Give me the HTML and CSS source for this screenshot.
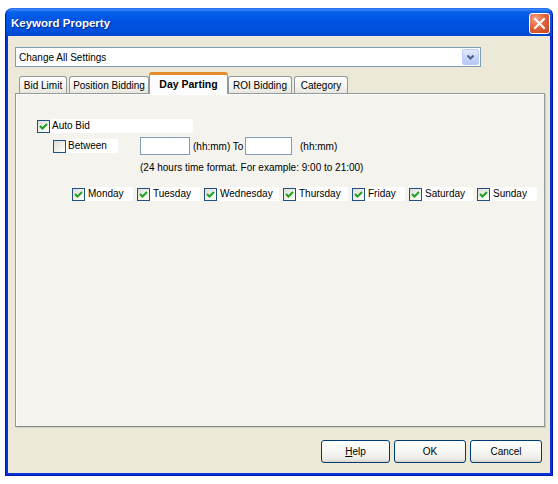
FILE: index.html
```html
<!DOCTYPE html>
<html>
<head>
<meta charset="utf-8">
<title>Keyword Property</title>
<link rel="stylesheet" href="styles.css">
</head>
<body>
<div class="window">
  <div class="titlebar">
    <span class="title">Keyword Property</span>
    <span class="close">
      <svg width="13" height="13" viewBox="0 0 13 13"><path d="M2 2 L11 11 M11 2 L2 11" stroke="#fff" stroke-width="2" stroke-linecap="square"/></svg>
    </span>
  </div>
  <div class="client">
    <div class="combo">
      <span class="combo-text">Change All Settings</span>
      <span class="combo-btn">
        <svg width="9" height="7" viewBox="0 0 9 7"><path d="M1.5 1.5 L4.5 4.5 L7.5 1.5" fill="none" stroke="#4d6185" stroke-width="2"/></svg>
      </span>
    </div>
    <div class="tabs">
      <div class="tab t-bid">Bid Limit</div>
      <div class="tab t-pos">Position Bidding</div>
      <div class="tab tab-active t-day">Day Parting</div>
      <div class="tab t-roi">ROI Bidding</div>
      <div class="tab t-cat">Category</div>
    </div>
    <div class="panel">
      <div class="row row-auto">
        <span class="cb checked"><svg width="11" height="11" viewBox="0 0 11 11"><path d="M2 5 L4.5 7.5 L9 3" fill="none" stroke="#21a121" stroke-width="2"/></svg></span>
        <span class="lbl lbl-auto">Auto Bid</span>
      </div>
      <div class="row row-between">
        <span class="cb"></span>
        <span class="lbl lbl-between">Between</span>
        <span class="tb tb-from"></span>
        <span class="txt txt-to">(hh:mm) To</span>
        <span class="tb tb-to"></span>
        <span class="txt txt-hm">(hh:mm)</span>
      </div>
      <div class="row row-note">(24 hours time format. For example: 9:00 to 21:00)</div>
      <div class="row row-days">
        <div class="day d-mon"><span class="cb checked"><svg width="11" height="11" viewBox="0 0 11 11"><path d="M2 5 L4.5 7.5 L9 3" fill="none" stroke="#21a121" stroke-width="2"/></svg></span><span class="lbl">Monday</span></div>
        <div class="day d-tue"><span class="cb checked"><svg width="11" height="11" viewBox="0 0 11 11"><path d="M2 5 L4.5 7.5 L9 3" fill="none" stroke="#21a121" stroke-width="2"/></svg></span><span class="lbl">Tuesday</span></div>
        <div class="day d-wed"><span class="cb checked"><svg width="11" height="11" viewBox="0 0 11 11"><path d="M2 5 L4.5 7.5 L9 3" fill="none" stroke="#21a121" stroke-width="2"/></svg></span><span class="lbl">Wednesday</span></div>
        <div class="day d-thu"><span class="cb checked"><svg width="11" height="11" viewBox="0 0 11 11"><path d="M2 5 L4.5 7.5 L9 3" fill="none" stroke="#21a121" stroke-width="2"/></svg></span><span class="lbl">Thursday</span></div>
        <div class="day d-fri"><span class="cb checked"><svg width="11" height="11" viewBox="0 0 11 11"><path d="M2 5 L4.5 7.5 L9 3" fill="none" stroke="#21a121" stroke-width="2"/></svg></span><span class="lbl">Friday</span></div>
        <div class="day d-sat"><span class="cb checked"><svg width="11" height="11" viewBox="0 0 11 11"><path d="M2 5 L4.5 7.5 L9 3" fill="none" stroke="#21a121" stroke-width="2"/></svg></span><span class="lbl">Saturday</span></div>
        <div class="day d-sun"><span class="cb checked"><svg width="11" height="11" viewBox="0 0 11 11"><path d="M2 5 L4.5 7.5 L9 3" fill="none" stroke="#21a121" stroke-width="2"/></svg></span><span class="lbl">Sunday</span></div>
      </div>
    </div>
    <div class="buttons">
      <span class="btn"><u>H</u>elp</span>
      <span class="btn">OK</span>
      <span class="btn">Cancel</span>
    </div>
  </div>
</div>
</body>
</html>
```
FILE: styles.css
```css
* { box-sizing: border-box; }
html, body { margin: 0; padding: 0; background: #ffffff; }
body {
  font-family: "Liberation Sans", Arial, sans-serif;
  font-size: 10px;
  color: #000;
}
.window {
  margin: 8px 0 0 5px;
  width: 548px;
  height: 468px;
  display: flex;
  flex-direction: column;
  background: #0831d9;
  border-radius: 7px 7px 0 0;
  overflow: hidden;
  border: 1px solid #0019a8;
  border-top-color: #2a6ff0;
}
.titlebar {
  height: 27px;
  flex: none;
  display: flex;
  align-items: center;
  justify-content: space-between;
  padding: 0 2px 0 5px;
  background: linear-gradient(#3d8ef8 0px, #0a62ea 3px, #0058e6 8px, #0053e0 50%, #0050dc 80%, #0046cc 100%);
}
.title {
  color: #fff;
  font-weight: bold;
  font-size: 11.5px;
  text-shadow: 1px 1px 0 #0a2a8a;
  padding-top: 1px;
}
.close {
  width: 21px;
  height: 21px;
  border: 1px solid #fff;
  border-radius: 3px;
  background: radial-gradient(circle at 30% 25%, #f0a487 0%, #e2653e 45%, #c63f18 100%);
  display: flex;
  align-items: center;
  justify-content: center;
  margin-top: 1px;
}
.client {
  flex: 1;
  margin: 0 2px 2px 2px;
  background: #ece9d8;
  display: flex;
  flex-direction: column;
  padding: 11px 0 0 7px;
}
.combo {
  width: 466px;
  height: 20px;
  border: 1px solid #7f9db9;
  background: #fff;
  display: flex;
  align-items: center;
  justify-content: space-between;
  padding: 0 1px 0 3px;
  flex: none;
}
.combo-text { font-size: 10px; }
.combo-btn {
  width: 17px;
  height: 16px;
  border: 1px solid #bccdf5;
  border-radius: 2px;
  background: linear-gradient(#e2eafd, #c4d5fb 60%, #b6c9f6);
  display: flex;
  align-items: center;
  justify-content: center;
}
.tabs {
  margin-top: 5px;
  height: 21px;
  display: flex;
  align-items: flex-end;
  padding-left: 4px;
  flex: none;
  position: relative;
  z-index: 1;
}
.tab {
  height: 17px;
  margin-right: 2px;
  border: 1px solid #919b9c;
  border-bottom: none;
  border-radius: 3px 3px 0 0;
  background: linear-gradient(#ffffff, #f3f3ef 60%, #e8e6dc);
  display: flex;
  align-items: center;
  justify-content: center;
  font-size: 10px;
  padding-top: 1px;
}
.tab-active {
  height: 22px;
  margin: 0 0 -1px -2px;
  border-top: 3px solid #e8a33a;
  border-color: #e68b2c #919b9c #919b9c;
  background: #fcfcfe;
  font-weight: bold;
  font-size: 10.5px;
  padding-top: 0;
  padding-bottom: 2px;
}
.t-bid { width: 48px; }
.t-pos { width: 80px; }
.t-day { width: 79px; margin-right: 0; }
.t-roi { width: 64px; }
.t-cat { width: 54px; }
.panel {
  width: 530px;
  height: 334px;
  flex: none;
  border: 1px solid #919b9c;
  border-bottom-color: #8a8a87;
  box-shadow: inset 1px 1px 0 #fff, 1px 1px 0 #d0cec2;
  background: #f4f3ee;
  padding: 25px 0 0 21px;
}
.row { display: flex; align-items: center; }
.cb {
  width: 13px;
  height: 13px;
  flex: none;
  border: 1px solid #1c5180;
  background: linear-gradient(135deg, #dcdcd7 0%, #f2f2ef 60%, #ffffff 100%);
  display: flex;
  align-items: center;
  justify-content: center;
}
.lbl {
  background: #fff;
  height: 14px;
  line-height: 14px;
  padding-left: 2px;
}
.row-auto { height: 14px; }
.lbl-auto { width: 143px; }
.row-between { margin-top: 4px; height: 18px; padding-left: 16px; }
.lbl-between { width: 52px; }
.tb {
  height: 18px;
  border: 1px solid #7f9db9;
  background: #fff;
  flex: none;
}
.tb-from { width: 50px; margin-left: 22px; }
.txt-to { margin-left: 3px; width: 52px; }
.tb-to { width: 47px; }
.txt-hm { margin-left: 8px; }
.row-note { margin-top: 6px; padding-left: 103px; height: 12px; }
.row-days { margin-top: 14px; padding-left: 35px; }
.day { display: flex; align-items: center; }
.day .lbl { flex: 1; padding-left: 3px; }
.d-mon { width: 65px; }
.d-tue { width: 67px; }
.d-wed { width: 79px; }
.d-thu { width: 69px; }
.d-fri { width: 57px; }
.d-sat { width: 68px; }
.d-sun { width: 60px; }
.day:not(:last-child) .lbl { margin-right: 4px; }
.buttons {
  margin-top: 13px;
  display: flex;
  justify-content: flex-end;
  gap: 4px;
  padding-right: 8px;
}
.btn {
  width: 72px;
  height: 23px;
  border: 1px solid #003c74;
  border-radius: 3px;
  background: linear-gradient(#ffffff 0%, #f6f6f3 50%, #ecebe6 85%, #d8d4c8 100%);
  display: flex;
  align-items: center;
  justify-content: center;
  font-size: 10px;
}
.btn:first-child { width: 69px; }
.btn u { text-decoration: underline; }
```
